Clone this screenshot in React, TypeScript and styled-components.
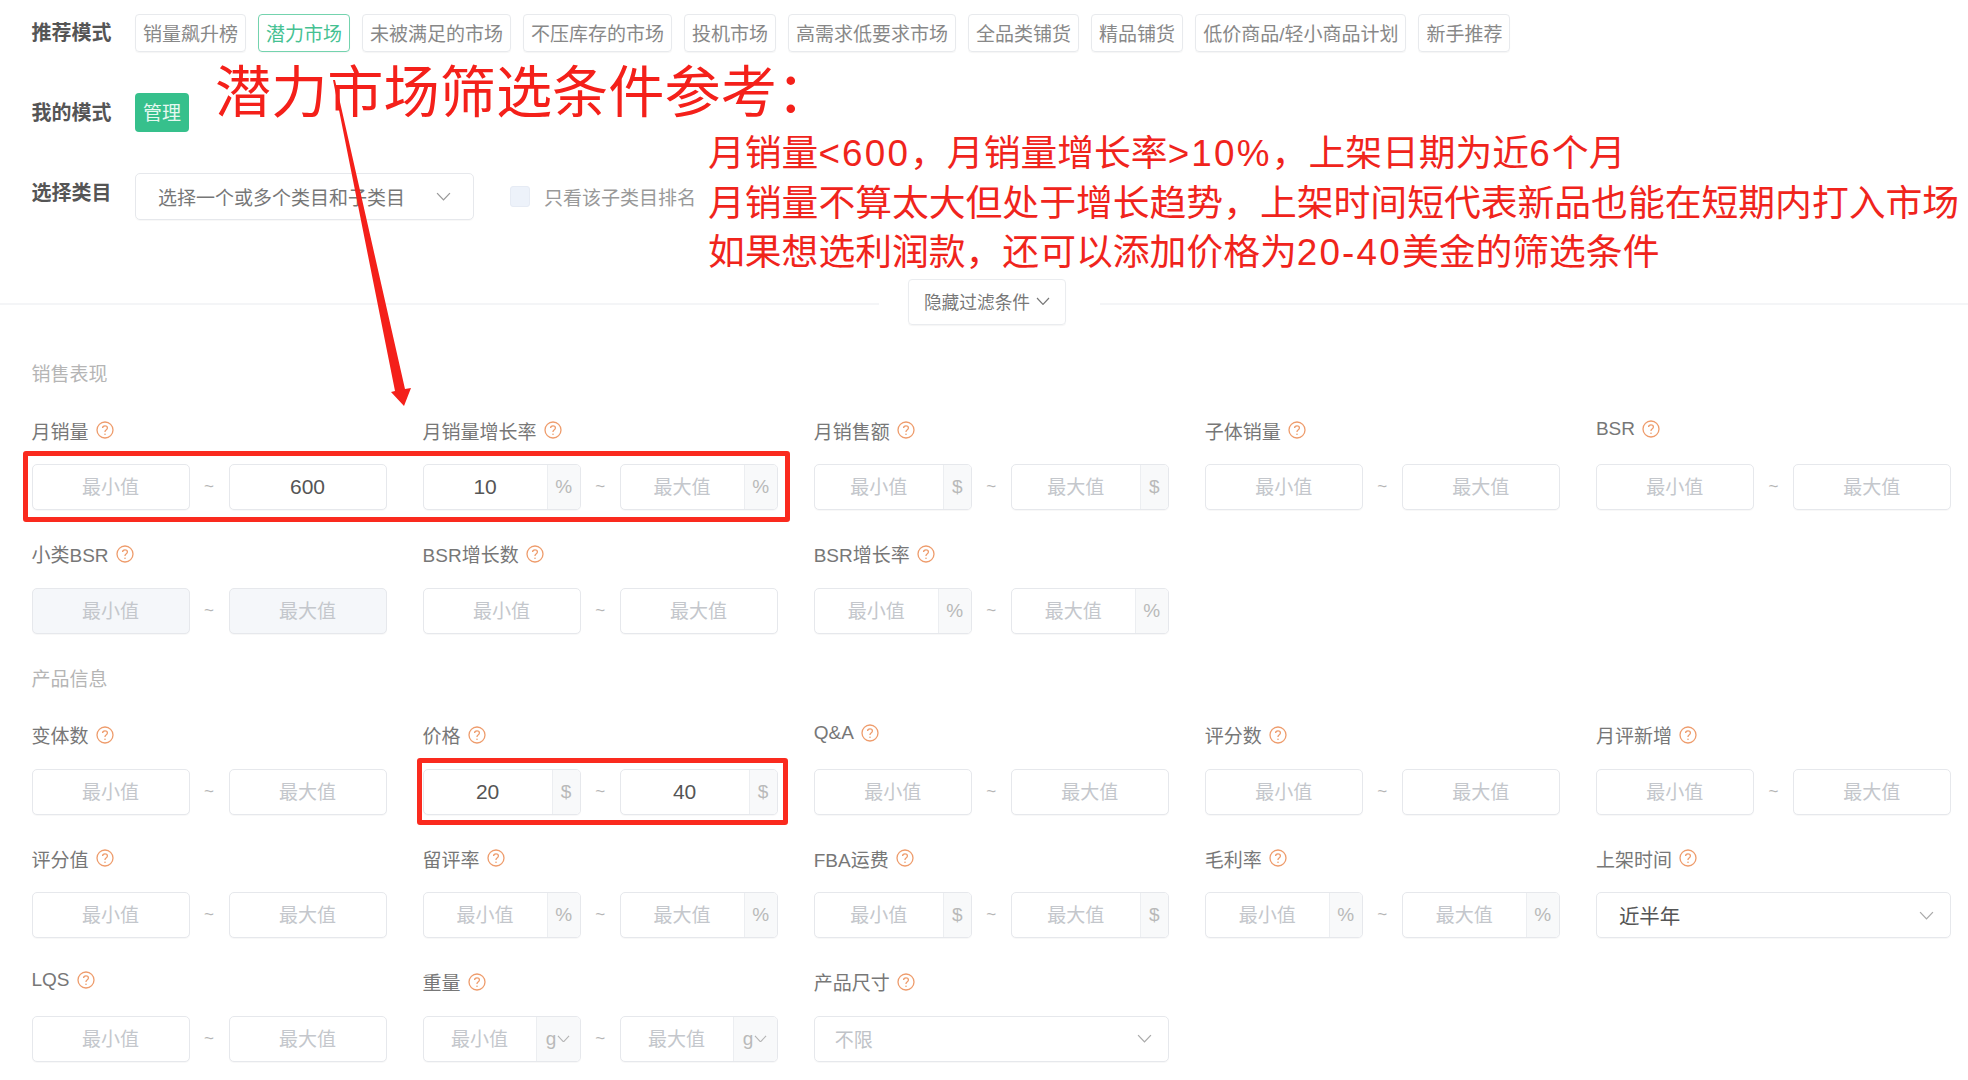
import React, { FC } from "react";
import styled, { createGlobalStyle } from "styled-components";

const GlobalStyle = createGlobalStyle`
  html, body {
    margin: 0;
    padding: 0;
    background: #fff;
    font-family: "Liberation Sans", "Noto Sans CJK SC", sans-serif;
  }
  * {
    box-sizing: border-box;
  }
`;

const Page = styled.div`
  position: relative;
  width: 1968px;
  height: 1080px;
  overflow: hidden;
  background: #fff;
`;

// 顶部
const TopPanel = styled.div`
  display: flex;
  flex-direction: column;
  gap: 41px;
  padding: 14px 0 0 31.5px;
`;

const ModeRow = styled.div`
  display: flex;
  align-items: center;
`;

const ModeLabel = styled.div<{ $up?: number }>`
  width: 103.5px;
  flex: none;
  font-size: 20px;
  line-height: 28px;
  font-weight: 700;
  color: #555;
  margin-bottom: ${(props) => props.$up || 0}px;
`;

const TagList = styled.div`
  display: flex;
  gap: 12px;
`;

const Tag = styled.div<{ $active?: boolean }>`
  height: 38px;
  padding: 0 7px 2px;
  display: flex;
  align-items: center;
  font-size: 19px;
  white-space: nowrap;
  border-radius: 4px;
  border: 1px solid ${(props) => (props.$active ? "#74d3ae" : "#e8eaed")};
  box-shadow: 0 1px 1px rgba(0, 0, 0, 0.04);
  color: ${(props) => (props.$active ? "#45c192" : "#888")};
`;

const ManageButton = styled.div`
  width: 54px;
  height: 39px;
  padding-bottom: 3px;
  border-radius: 4px;
  background: #36c08c;
  color: #e6f8f0;
  font-size: 19px;
  display: flex;
  align-items: center;
  justify-content: center;
`;

const CategorySelect = styled.div`
  width: 339px;
  height: 47px;
  padding: 0 22px 1px;
  display: flex;
  align-items: center;
  justify-content: space-between;
  border: 1px solid #e6e8ec;
  border-radius: 5px;
  font-size: 19px;
  color: #777;
  white-space: nowrap;
  box-shadow: 0 1px 1px rgba(0, 0, 0, 0.03);
`;

const CheckLabel = styled.div`
  display: flex;
  align-items: center;
  gap: 14px;
  margin-left: 36px;
  font-size: 19px;
  color: #999;
`;

const CheckBox = styled.div`
  width: 20px;
  height: 21px;
  border-radius: 3px;
  background: #edf2fa;
  border: 1px solid #e6ebf4;
`;

// 分割线
const DividerRow = styled.div`
  display: flex;
  align-items: center;
  margin-top: 59px;
`;

const DividerLine = styled.div<{ $width?: number }>`
  flex: ${(props) => (props.$width ? `0 0 ${props.$width}px` : "1")};
  height: 2px;
  background: #f4f5f7;
  margin-top: 3px;
`;

const CollapseButton = styled.div`
  width: 158px;
  height: 46px;
  margin: 0 34px 0 29px;
  padding-bottom: 2px;
  display: flex;
  align-items: center;
  justify-content: center;
  gap: 6px;
  border: 1px solid #eaecef;
  border-radius: 4px;
  font-size: 17.7px;
  color: #777;
  box-shadow: 0 1px 1px rgba(0, 0, 0, 0.04);
`;

// 过滤条件
const FilterPanel = styled.div`
  padding: 37px 17px 0 31.5px;
`;

const SectionTitle = styled.div<{ $first?: boolean }>`
  font-size: 19px;
  line-height: 26px;
  color: #b5b5b5;
  margin-top: ${(props) => (props.$first ? 0 : 33)}px;
  margin-bottom: 29px;
`;

const FieldGrid = styled.div`
  display: grid;
  grid-template-columns: repeat(5, 355px);
  column-gap: 36.1px;
  row-gap: 30.5px;
`;

const FieldLabel = styled.div<{ $latin?: boolean }>`
  display: flex;
  align-items: center;
  gap: 7px;
  height: 26px;
  margin-bottom: 21px;
  font-size: 19px;
  color: #777;
  padding-bottom: ${(props) => (props.$latin ? 3 : 0)}px;
`;

const RangeRow = styled.div`
  display: grid;
  grid-template-columns: 158px 39px 158px;
  align-items: center;
`;

const Tilde = styled.div`
  text-align: center;
  font-size: 17px;
  color: #b5b5b5;
`;

const InputBox = styled.div<{ $disabled?: boolean }>`
  height: 46px;
  display: flex;
  overflow: hidden;
  border: 1px solid #e6e8ec;
  border-radius: 5px;
  background: ${(props) => (props.$disabled ? "#f5f7fa" : "#fff")};
  box-shadow: 0 1px 1px rgba(0, 0, 0, 0.03);
`;

const NumberInput = styled.input`
  flex: 1;
  min-width: 0;
  height: 100%;
  border: none;
  outline: none;
  padding: 0;
  background: transparent;
  text-align: center;
  font-family: inherit;
  font-size: 21px;
  color: #555;

  &::placeholder {
    font-size: 19px;
    color: #c4c7cc;
    opacity: 1;
  }
`;

const Suffix = styled.div<{ $width: number }>`
  flex: none;
  width: ${(props) => props.$width}px;
  display: flex;
  align-items: center;
  justify-content: center;
  gap: 1px;
  background: #f8f9fa;
  border-left: 1px solid #eceef1;
  color: #b9b9b9;
  font-size: 19px;
`;

const ValueSelect = styled.div<{ $placeholder?: boolean }>`
  height: 46px;
  padding: 0 16px 0 ${(props) => (props.$placeholder ? 20 : 22)}px;
  display: flex;
  align-items: center;
  justify-content: space-between;
  border: 1px solid #e6e8ec;
  border-radius: 5px;
  font-size: ${(props) => (props.$placeholder ? 19 : 20.5)}px;
  color: ${(props) => (props.$placeholder ? "#c0c3c8" : "#555")};
  box-shadow: 0 1px 1px rgba(0, 0, 0, 0.03);
`;

// 红色标注
const AnnotationTitle = styled.div`
  position: absolute;
  left: 215px;
  top: 53px;
  font-size: 56.2px;
  line-height: 80px;
  color: #f4201a;
  white-space: nowrap;
`;

const AnnotationLines = styled.div`
  position: absolute;
  left: 708px;
  top: 129px;
  font-size: 36.8px;
  line-height: 49.5px;
  color: #f0241c;
  white-space: nowrap;
`;

const LatinRun = styled.span`
  letter-spacing: 2.2px;
`;

const RedBox = styled.div<{ $left: number; $top: number; $width: number; $height: number }>`
  position: absolute;
  left: ${(props) => props.$left}px;
  top: ${(props) => props.$top}px;
  width: ${(props) => props.$width}px;
  height: ${(props) => props.$height}px;
  border: 5px solid #fa2a1e;
  border-radius: 3px;
`;

const ArrowSvg = styled.svg`
  position: absolute;
  left: 0;
  top: 0;
  pointer-events: none;
`;

const Chevron: FC<{ size?: number; color?: string }> = ({ size = 14, color = "#999" }) => (
  <svg width={size} height={size * 0.6} viewBox="0 0 14 8.4" fill="none">
    <path d="M1 1l6 6.4L13 1" stroke={color} strokeWidth="1.2" />
  </svg>
);

const HelpIcon: FC = () => (
  <svg width="18" height="18" viewBox="0 0 18 18" fill="none">
    <circle cx="9" cy="9" r="8" stroke="#ee9c6c" strokeWidth="1.3" />
    <path
      d="M6.6 7.1C6.6 5.8 7.6 4.9 9 4.9s2.4.9 2.4 2.1c0 1-.6 1.5-1.3 2-.7.5-1.1.9-1.1 1.7v.4"
      stroke="#ee9c6c"
      strokeWidth="1.3"
    />
    <circle cx="9" cy="13.3" r="0.8" fill="#ee9c6c" />
  </svg>
);

interface FieldData {
  label: string;
  latin?: boolean;
  suffix?: string;
  disabled?: boolean;
  min?: string;
  max?: string;
  select?: string;
  placeholder?: boolean;
}

const salesFields: FieldData[] = [
  { label: "月销量", max: "600" },
  { label: "月销量增长率", suffix: "%", min: "10" },
  { label: "月销售额", suffix: "$" },
  { label: "子体销量" },
  { label: "BSR", latin: true },
  { label: "小类BSR", disabled: true },
  { label: "BSR增长数" },
  { label: "BSR增长率", suffix: "%" },
];

const productFields: FieldData[] = [
  { label: "变体数" },
  { label: "价格", suffix: "$", min: "20", max: "40" },
  { label: "Q&A", latin: true },
  { label: "评分数" },
  { label: "月评新增" },
  { label: "评分值" },
  { label: "留评率", suffix: "%" },
  { label: "FBA运费", suffix: "$" },
  { label: "毛利率", suffix: "%" },
  { label: "上架时间", select: "近半年" },
  { label: "LQS", latin: true },
  { label: "重量", suffix: "g" },
  { label: "产品尺寸", select: "不限", placeholder: true },
];

const suffixWidth = (suffix: string) => {
  if (suffix === "g") return 44;
  if (suffix === "$") return 28;
  return 33;
};

const RangeInput: FC<{ placeholder: string; field: FieldData; value?: string }> = ({
  placeholder,
  field,
  value,
}) => (
  <InputBox $disabled={field.disabled}>
    <NumberInput placeholder={placeholder} defaultValue={value} />
    {field.suffix && (
      <Suffix $width={suffixWidth(field.suffix)}>
        {field.suffix}
        {field.suffix === "g" && <Chevron size={13} color="#b5b5b5" />}
      </Suffix>
    )}
  </InputBox>
);

const Field: FC<{ field: FieldData }> = ({ field }) => (
  <div>
    <FieldLabel $latin={field.latin}>
      {field.label}
      <HelpIcon />
    </FieldLabel>
    {field.select ? (
      <ValueSelect $placeholder={field.placeholder}>
        {field.select}
        <Chevron size={15} color="#aaa" />
      </ValueSelect>
    ) : (
      <RangeRow>
        <RangeInput placeholder="最小值" field={field} value={field.min} />
        <Tilde>~</Tilde>
        <RangeInput placeholder="最大值" field={field} value={field.max} />
      </RangeRow>
    )}
  </div>
);

const tags = [
  "销量飙升榜",
  "潜力市场",
  "未被满足的市场",
  "不压库存的市场",
  "投机市场",
  "高需求低要求市场",
  "全品类铺货",
  "精品铺货",
  "低价商品/轻小商品计划",
  "新手推荐",
];

const App: FC = () => {
  return (
    <Page>
      <GlobalStyle />
      <TopPanel>
        <ModeRow>
          <ModeLabel>推荐模式</ModeLabel>
          <TagList>
            {tags.map((tag) => (
              <Tag key={tag} $active={tag === "潜力市场"}>
                {tag}
              </Tag>
            ))}
          </TagList>
        </ModeRow>
        <ModeRow>
          <ModeLabel>我的模式</ModeLabel>
          <ManageButton>管理</ManageButton>
        </ModeRow>
        <ModeRow>
          <ModeLabel $up={8}>选择类目</ModeLabel>
          <CategorySelect>
            选择一个或多个类目和子类目
            <Chevron size={15} color="#999" />
          </CategorySelect>
          <CheckLabel>
            <CheckBox />
            只看该子类目排名
          </CheckLabel>
        </ModeRow>
      </TopPanel>

      <DividerRow>
        <DividerLine $width={879} />
        <CollapseButton>
          隐藏过滤条件
          <Chevron size={14} color="#777" />
        </CollapseButton>
        <DividerLine />
      </DividerRow>

      <FilterPanel>
        <SectionTitle $first>销售表现</SectionTitle>
        <FieldGrid>
          {salesFields.map((field) => (
            <Field key={field.label} field={field} />
          ))}
        </FieldGrid>
        <SectionTitle>产品信息</SectionTitle>
        <FieldGrid>
          {productFields.map((field) => (
            <Field key={field.label} field={field} />
          ))}
        </FieldGrid>
      </FilterPanel>

      <AnnotationTitle>潜力市场筛选条件参考：</AnnotationTitle>
      <AnnotationLines>
        <div>
          月销量<LatinRun>&lt;600</LatinRun>，月销量增长率<LatinRun>&gt;10%</LatinRun>，上架日期为近
          <LatinRun>6</LatinRun>个月
        </div>
        <div>月销量不算太大但处于增长趋势，上架时间短代表新品也能在短期内打入市场</div>
        <div>
          如果想选利润款，还可以添加价格为<LatinRun>20-40</LatinRun>美金的筛选条件
        </div>
      </AnnotationLines>
      <RedBox $left={23} $top={451} $width={767} $height={71} />
      <RedBox $left={417} $top={758} $width={371} $height={67} />
      <ArrowSvg width="1968" height="1080" viewBox="0 0 1968 1080">
        <polygon points="333,80 335,80 405,389 411,388 404,406 391,392 395,391" fill="#f4201a" />
      </ArrowSvg>
    </Page>
  );
};

export default App;
